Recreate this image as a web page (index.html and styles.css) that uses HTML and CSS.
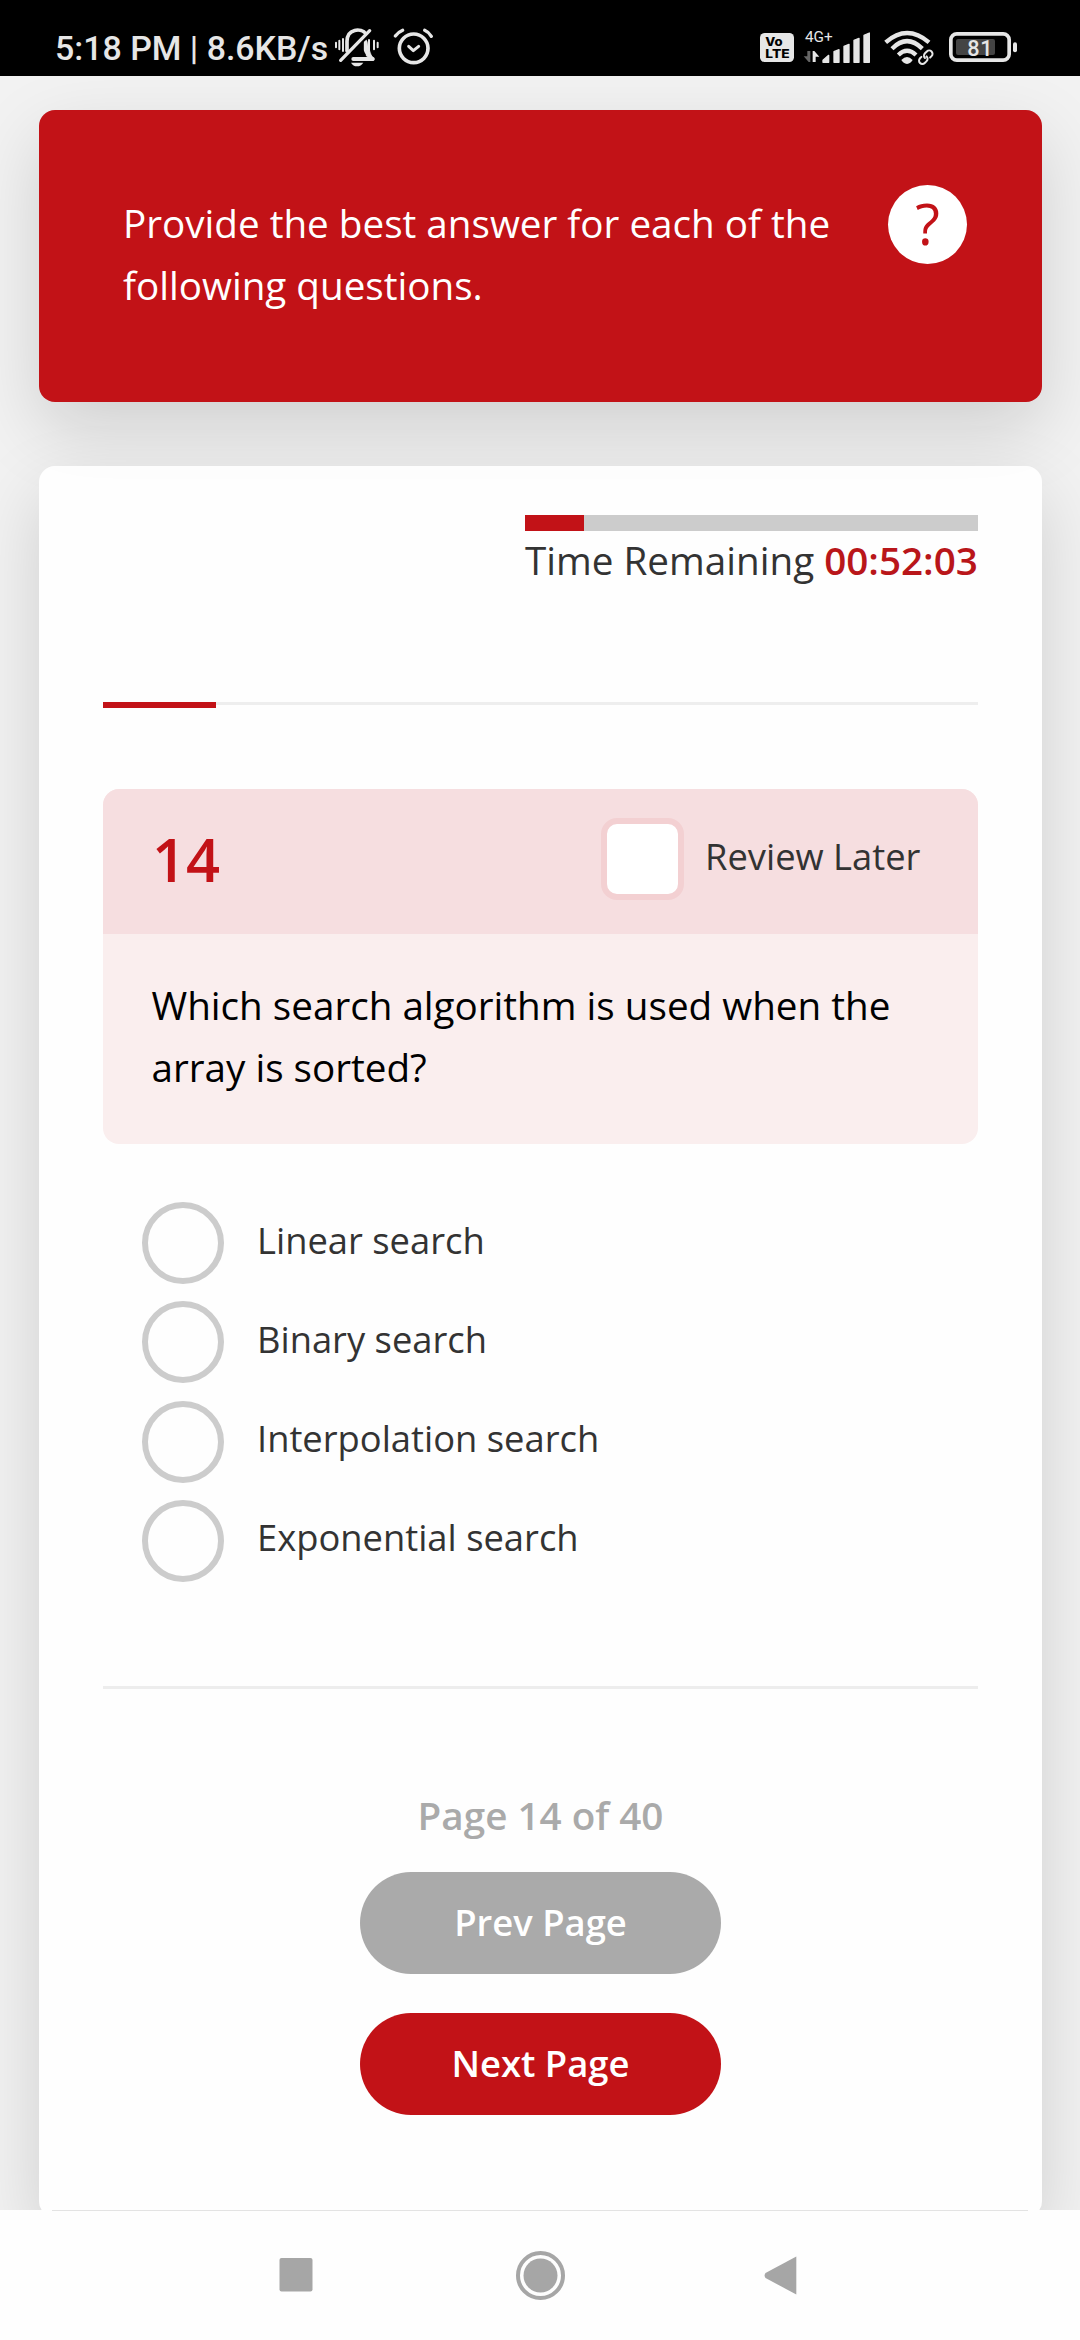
FILE: index.html
```html
<!DOCTYPE html>
<html lang="en">
<head>
<meta charset="utf-8">
<title>Quiz</title>
<link rel="stylesheet" href="styles.css">
</head>
<body>
<header class="status">
  <span class="status-text">5:18 PM | 8.6KB/s</span>
  <svg class="status-left" width="110" height="56" viewBox="0 0 330 168" fill="none" stroke="#e6e6e6" stroke-linecap="round" stroke-linejoin="round">
    <path d="M18 68v14M28 62v26M39 57v36M117 60v32M132 62v26M143 68v14" stroke-width="6"/>
    <path d="M51 92V64C51 26 93 22 108 42M107 66V90Q108 99 128 117" stroke-width="11"/>
    <path d="M108 60L109 108L128 117L121 98Z" fill="#e6e6e6" stroke-width="2"/>
    <path d="M70 117H128" stroke-width="12"/>
    <path d="M40 120L126 36" stroke="#000" stroke-width="8"/>
    <path d="M32 121L119 32" stroke-width="10"/>
    <path d="M63 128H100Q93 139 81 139T63 128Z" fill="#e6e6e6" stroke="none"/>
    <circle cx="251" cy="85" r="43" stroke-width="11"/>
    <path d="M236 79L250 92L266 79" stroke-width="9"/>
    <path d="M196 48Q204 37 218 31M284 31Q296 36 304 49" stroke-width="10"/>
  </svg>
  <svg class="status-signal" width="130" height="56" viewBox="0 0 390 168">
    <rect x="30" y="39" width="102" height="87" rx="14" fill="#e6e6e6"/>
    <text class="volte" x="46" y="79" textLength="52" lengthAdjust="spacingAndGlyphs">Vo</text>
    <text class="volte" x="46" y="114" textLength="73" lengthAdjust="spacingAndGlyphs">LTE</text>
    <text class="net" x="165" y="66">4G+</text>
    <path d="M181 93V126H176L161 109H172V93Z" fill="#666"/>
    <path d="M188 126V93H193L208 110H197V126Z" fill="#e6e6e6"/>
    <path fill="#e6e6e6" stroke="#e6e6e6" stroke-width="4" stroke-linejoin="round" d="M219 127V121L236 106V127ZM252 127V95L267 89V127ZM282 127V79L297 73V127ZM312 127V61L327 55V127ZM342 127V46L358 39V127Z"/>
  </svg>
  <svg class="status-right" width="150" height="56" viewBox="0 0 450 168" fill="none" stroke="#e6e6e6">
    <path d="M17 67Q81 11 147 67M36 86Q81 41 127 86M55 105Q81 80 108 105" stroke-width="13"/>
    <path d="M64 120Q81 102 98 120Q92 131 81 132Q70 131 64 120Z" fill="#e6e6e6" stroke="none"/>
    <g transform="translate(137 112) rotate(-45)" stroke-linecap="round">
      <rect x="-28" y="-13" width="57" height="26" rx="13" fill="#000" stroke="#000" stroke-width="10"/>
      <path d="M4 0A10 10 0 0 1-6 10H-14A10 10 0 0 1-14-10H-8M-3 0A10 10 0 0 1 7-10H15A10 10 0 0 1 15 10H9" stroke-width="6"/>
    </g>
    <rect x="212.500" y="41.500" width="175" height="79" rx="18" stroke-width="11"/>
    <rect x="228" y="57" width="117" height="48" rx="6" fill="#444" stroke="none"/>
    <rect x="399" y="67" width="12" height="30" rx="6" fill="#e6e6e6" stroke="none"/>
    <text class="level" x="262" y="107" textLength="76">81</text>
  </svg>
</header>

<main class="page">
  <section class="card intro">
    <p class="intro-text">Provide the best answer for each of the following questions.</p>
    <span class="help">?</span>
  </section>

  <section class="card quiz">
    <div class="timer">
      <div class="timer-bar"><div class="timer-fill" style="width:13%"></div></div>
      <div class="timer-text">Time Remaining <b>00:52:03</b></div>
    </div>
    <div class="progress"><div class="progress-fill"></div></div>

    <div class="question">
      <div class="question-head">
        <span class="number">14</span>
        <label class="review"><span class="checkbox"></span><span class="review-label">Review Later</span></label>
      </div>
      <p class="question-text">Which search algorithm is used when the array is sorted?</p>
    </div>

    <ul class="options">
      <li class="option"><span class="radio"></span><span>Linear search</span></li>
      <li class="option"><span class="radio"></span><span>Binary search</span></li>
      <li class="option"><span class="radio"></span><span>Interpolation search</span></li>
      <li class="option"><span class="radio"></span><span>Exponential search</span></li>
    </ul>

    <div class="pager">
      <div class="page-count">Page 14 of 40</div>
      <div class="btn btn-prev">Prev Page</div>
      <div class="btn btn-next">Next Page</div>
    </div>
  </section>
</main>

<nav class="navbar">
  <svg width="1080" height="129" viewBox="0 1 1080 129" fill="#a6a6a6">
    <rect x="279.500" y="48" width="33" height="33.500" rx="2"/>
    <circle cx="540.500" cy="65.500" r="17"/>
    <circle cx="540.500" cy="65.500" r="22.500" fill="none" stroke="#a6a6a6" stroke-width="4"/>
    <path d="M796.300 46.500V84.500L765.500 68Q763.700 65.500 765.500 63Z"/>
  </svg>
</nav>
</body>
</html>
```
FILE: styles.css
```css
* { box-sizing: border-box; }

body {
  margin: 0;
  width: 1080px;
  height: 2340px;
  overflow: hidden;
  display: flex;
  flex-direction: column;
  background: #f2f2f2;
  color: #333;
  font-family: "Open Sans", sans-serif;
  font-size: 38.64px;
}

p, ul { margin: 0; padding: 0; }

.status {
  flex: none;
  height: 76px;
  display: flex;
  align-items: flex-start;
  padding: 20px 50px 0 55px;
  background: #000;
  color: #e6e6e6;
}
.status svg { flex: none; display: block; }
.status-text {
  font: 500 33.9px/40px Roboto, sans-serif;
  padding-top: 9px;
  width: 275px;
  white-space: nowrap;
}
.status-signal { margin-left: auto; }
.volte { font: 800 35px Inter, sans-serif; fill: #000; }
.net { font: 400 46px Roboto, sans-serif; fill: #e6e6e6; }
.level { font: 500 65px Roboto, sans-serif; fill: #e6e6e6; stroke: none; }

.page {
  flex: none;
  height: 2134px;
  padding: 34px 38px 0 39px;
  overflow: hidden;
}
.card {
  border-radius: 16px;
  box-shadow: 0 27px 72px rgba(0, 0, 0, .145);
}

.intro {
  height: 292px;
  display: flex;
  justify-content: space-between;
  align-items: flex-start;
  padding: 74.500px 75px 0 84px;
  background: #c21217;
  color: #fff;
}
.intro-text { width: 720px; padding-top: 7.500px; line-height: 62px; }
.help {
  width: 79px;
  height: 79px;
  border-radius: 50%;
  background: #fff;
  color: #c21217;
  font-size: 57px;
  line-height: 77px;
  text-align: center;
}

.quiz {
  height: 1751px;
  margin-top: 64px;
  padding: 49px 64px 0;
  background: rgba(255, 255, 255, .88);
}

.timer { width: 453px; margin-left: auto; }
.timer-bar { height: 16px; background: #ccc; }
.timer-fill { height: 100%; background: #c21217; }
.timer-text { padding-top: 3px; line-height: 53px; white-space: nowrap; }
.timer-text b { font-weight: 600; color: #b9161a; }

.progress { height: 6px; margin-top: 115px; background: linear-gradient(#eee 3px, transparent 3px); }
.progress-fill { width: 113px; height: 6px; background: #c21217; }

.question {
  height: 355px;
  margin-top: 81px;
  border-radius: 16px;
  overflow: hidden;
  background: #faeeee;
}
.question-head {
  height: 145px;
  display: flex;
  justify-content: space-between;
  align-items: flex-start;
  padding: 29px 54px 0 49px;
  background: #f6dee0;
}
.number { padding-top: 11px; font-size: 59.500px; font-weight: 600; line-height: 60px; color: #c21217; }
.review { display: flex; align-items: flex-start; width: 323px; gap: 21px; font-size: 36.350px; }
.checkbox { flex: none; width: 83px; height: 82px; border: 6px solid #f3d0d2; border-radius: 16px; background: #fff; }
.review-label { padding-top: 14px; line-height: 48px; white-space: nowrap; }
.question-text { width: 820px; padding: 40px 0 0 48.500px; line-height: 62px; color: #000; }

.options {
  list-style: none;
  margin-top: 58px;
  padding: 0 0 104px 39px;
  border-bottom: 3px solid #ededed;
  display: flex;
  flex-direction: column;
  gap: 17.330px;
  font-size: 36.350px;
  line-height: 56px;
}
.option { display: flex; align-items: center; height: 82px; gap: 33px; }
.option > span:last-child { margin-top: -7px; }
.radio { width: 82px; height: 82px; border: 6px solid #ccc; border-radius: 50%; }

.pager { display: flex; flex-direction: column; align-items: center; padding-top: 100px; font-weight: 600; }
.page-count { line-height: 52px; color: #aaa; }
.btn {
  width: 361px;
  height: 102px;
  border-radius: 51px;
  color: #fff;
  font-size: 36.400px;
  line-height: 100px;
  text-align: center;
}
.btn-prev { margin-top: 31px; background: #aaa; }
.btn-next { margin-top: 39px; background: #c21217; }

.navbar { flex: none; height: 130px; background: #fefefe; }
.navbar::before { content: ""; display: block; width: 976px; height: 1px; margin-left: 52px; background: #e3e3e3; }
.navbar svg { display: block; }
```
